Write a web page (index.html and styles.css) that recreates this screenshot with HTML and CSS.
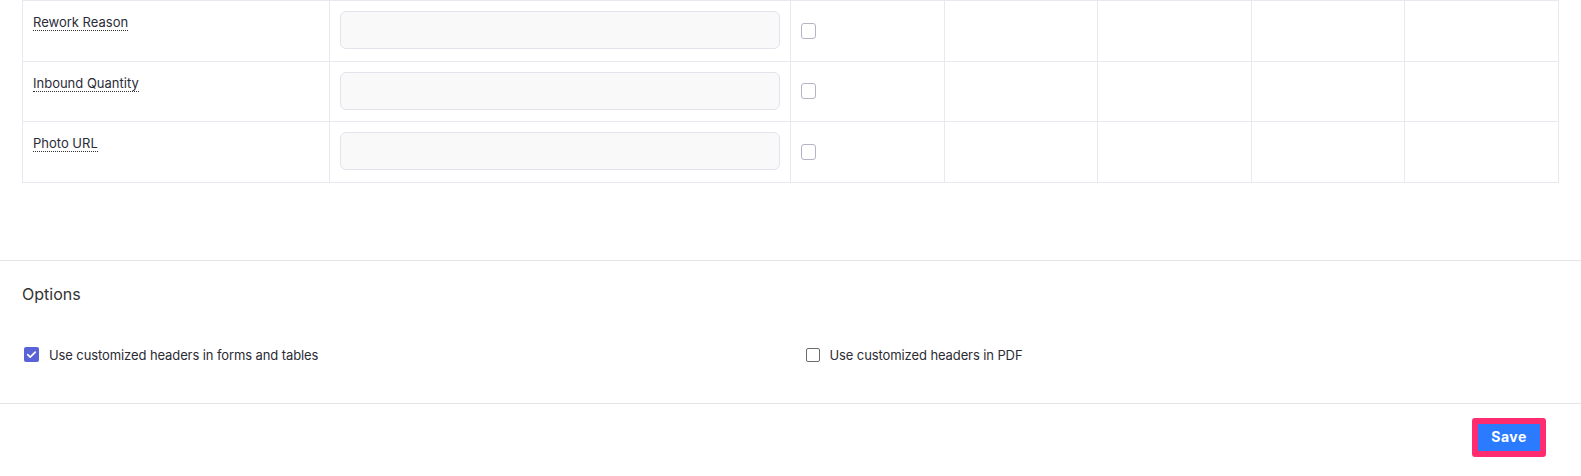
FILE: index.html
```html
<!DOCTYPE html>
<html>
<head>
<meta charset="utf-8">
<link rel="stylesheet" href="styles.css">
</head>
<body>
<div class="table-wrap">
  <table class="fields">
    <colgroup>
      <col class="c-label"><col class="c-input"><col class="c-small"><col class="c-small"><col class="c-small"><col class="c-small"><col class="c-small">
    </colgroup>
    <tr>
      <td class="label"><span class="hint">Rework Reason</span></td>
      <td class="input-cell"><div class="field"></div></td>
      <td class="check-cell"><span class="box"></span></td>
      <td></td><td></td><td></td><td></td>
    </tr>
    <tr>
      <td class="label"><span class="hint">Inbound Quantity</span></td>
      <td class="input-cell"><div class="field"></div></td>
      <td class="check-cell"><span class="box"></span></td>
      <td></td><td></td><td></td><td></td>
    </tr>
    <tr>
      <td class="label"><span class="hint">Photo URL</span></td>
      <td class="input-cell"><div class="field"></div></td>
      <td class="check-cell"><span class="box"></span></td>
      <td></td><td></td><td></td><td></td>
    </tr>
  </table>
</div>

<section class="options">
  <h2 class="options-title">Options</h2>
  <div class="options-grid">
    <label class="opt">
      <span class="cb checked">
        <svg viewBox="0 0 16 16" width="15" height="15"><path d="M4 8.2l2.6 2.6L12 5.4" fill="none" stroke="#fff" stroke-width="1.8" stroke-linecap="round" stroke-linejoin="round"/></svg>
      </span>
      <span class="opt-text">Use customized headers in forms and tables</span>
    </label>
    <label class="opt">
      <span class="cb"></span>
      <span class="opt-text">Use customized headers in PDF</span>
    </label>
  </div>
</section>

<footer class="footer">
  <button class="save">Save</button>
</footer>
</body>
</html>
```

FILE: styles.css
```css
* { box-sizing: border-box; }

body {
  margin: 0;
  font-family: Inter, "Noto Sans", "Liberation Sans", sans-serif;
  color: #2b2b38;
  background: #fff;
}

.table-wrap {
  padding: 0 22px 0 22px;
}

.fields {
  width: 100%;
  border-collapse: collapse;
  table-layout: fixed;
}

.c-label { width: 20%; }
.c-input { width: 30%; }
.c-small { width: 10%; }

.fields td {
  border: 1px solid #e8e8ef;
  height: 60.5px;
  padding: 10px;
  vertical-align: top;
}

.fields td.label {
  font-size: 13px;
  line-height: 20px;
  padding-top: 11px;
}

.hint {
  border-bottom: 1px dotted #333;
  padding-bottom: 0;
}

.fields td.input-cell {
  padding: 10px 10px;
}

.field {
  height: 38px;
  background: #f9f9f9;
  border: 1px solid #e3e3ee;
  border-radius: 6px;
}

.fields td.check-cell {
  vertical-align: middle;
  padding: 0 10px;
}

.box {
  display: block;
  width: 15px;
  height: 16px;
  border: 1px solid #b4b4c4;
  border-radius: 3px;
  background: #fff;
}

.options {
  margin-top: 77px;
  border-top: 1px solid #e4e4e8;
  padding: 23px 22px 38px 22px;
}

.options-title {
  margin: 0;
  font-size: 16px;
  line-height: 20px;
  font-weight: 400;
  color: #333;
}

.options-grid {
  margin-top: 41px;
  display: grid;
  grid-template-columns: 1fr 1fr;
  column-gap: 26px;
}

.opt {
  display: flex;
  align-items: center;
  gap: 10px;
  font-size: 13px;
  line-height: 20px;
  letter-spacing: -0.1px;
  color: #2b2b33;
  padding-left: 2px;
}

.cb {
  width: 14px;
  height: 14px;
  border: 1.5px solid #6b6b6b;
  border-radius: 2px;
  display: flex;
  align-items: center;
  justify-content: center;
  flex: none;
}

.cb.checked {
  width: 15px;
  height: 15px;
  border: none;
  background: #5a62d8;
}

.footer {
  border-top: 1px solid #e4e4e8;
  display: flex;
  justify-content: flex-end;
  padding: 14px 35px 0 0;
}

.save {
  font-family: Inter, "Noto Sans", sans-serif;
  font-size: 14px;
  font-weight: 700;
  letter-spacing: 0.5px;
  color: #fff;
  background: #2a7bff;
  border: 6px solid #ff2d6f;
  border-radius: 3px;
  height: 39px;
  width: 74px;
  padding: 0;
  line-height: 26px;
}
```
